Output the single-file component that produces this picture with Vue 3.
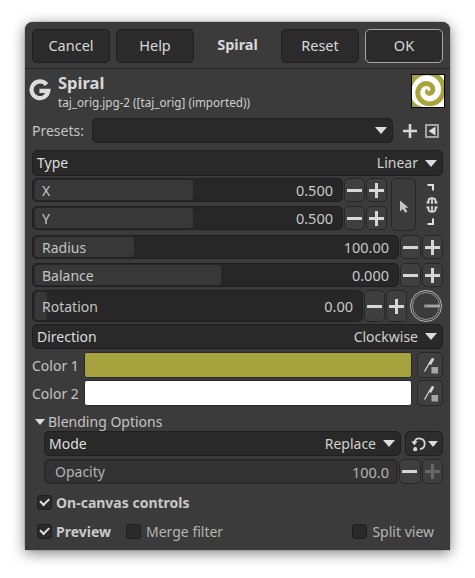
<script setup>
const xy = [
  { label: 'X', value: '0.500' },
  { label: 'Y', value: '0.500' },
]
const sliders = [
  { label: 'Radius', value: '100.00', fill: 99 },
  { label: 'Balance', value: '0.000', fill: 186 },
]
const colors = [
  { label: 'Color 1', cls: 'olive' },
  { label: 'Color 2', cls: 'white' },
]

function spiralPath() {
  const pts = []
  for (let a = -Math.PI * 1.25; a <= 9.0; a += 0.15) {
    const r = 15.5 - (11 * a) / (2 * Math.PI)
    pts.push((17 + r * Math.cos(a)).toFixed(2) + ' ' + (17 + r * Math.sin(a)).toFixed(2))
  }
  return 'M' + pts.join('L')
}
const spiral = spiralPath()
</script>

<template>
  <div class="page">
    <div class="win">
      <header class="head">
        <button class="btn">Cancel</button>
        <button class="btn">Help</button>
        <div class="head-title">Spiral</div>
        <button class="btn">Reset</button>
        <button class="btn ok">OK</button>
      </header>

      <main class="body">
        <section class="info">
          <svg class="logo" viewBox="0 0 22 22" width="22" height="22">
            <path d="M17.6 5.6A8.4 8.4 0 1 0 19.3 11.8H10.4" fill="none" stroke="#dcdcdc" stroke-width="4.2" />
          </svg>
          <div class="info-text">
            <div class="info-title">Spiral</div>
            <div class="info-sub">taj_orig.jpg-2 ([taj_orig] (imported))</div>
          </div>
          <svg class="thumb" viewBox="0 0 34 34" width="34" height="34">
            <defs>
              <clipPath id="thumb-clip"><rect x="1" y="1" width="32" height="32" /></clipPath>
            </defs>
            <rect x="0" y="0" width="34" height="34" fill="#000" />
            <rect x="1" y="1" width="32" height="32" fill="#fff" />
            <g clip-path="url(#thumb-clip)">
              <path d="M1 1H13C7 3 3 7 1 13Z" fill="#a8a33c" />
              <path d="M1 25C3 29 7 32 12 33H1Z" fill="#a8a33c" />
              <path :d="spiral" fill="none" stroke="#a8a33c" stroke-width="5" />
            </g>
          </svg>
        </section>

        <section class="presets">
          <span class="lbl presets-lbl">Presets:</span>
          <div class="combo presets-combo"><i class="tri"></i></div>
          <svg class="plain-plus" viewBox="0 0 14 14" width="14" height="14"><path d="M7 0V14M0 7H14" stroke="#d6d6d6" stroke-width="2.6" /></svg>
          <svg class="menu-ic" viewBox="0 0 14 14" width="14" height="14">
            <rect x="1" y="1" width="12" height="12" fill="none" stroke="#a4a4a4" stroke-width="2" />
            <path d="M10.5 2.5V11.5L3.5 7Z" fill="#e0e0e0" />
          </svg>
        </section>

        <div class="combo type-row"><span>Type</span><span class="combo-val">Linear</span><i class="tri"></i></div>

        <section class="xy">
          <div class="xy-rows">
            <div v-for="r in xy" :key="r.label" class="spin-row">
              <div class="spin xy-spin">
                <div class="fill" style="width: 158px"></div>
                <span class="spin-lbl xy-lbl">{{ r.label }}</span>
                <span class="spin-val">{{ r.value }}</span>
              </div>
              <button class="sbtn minus"></button>
              <button class="sbtn plus"></button>
            </div>
          </div>
          <button class="pick">
            <svg viewBox="0 0 14 16" width="14" height="16"><path d="M3 3.5V14.5L5.6 12L8.4 15.8L10.4 14.4L8 10.8H11.6Z" fill="#c4c4c4" /></svg>
          </button>
          <svg class="chain" viewBox="0 0 14 54" width="14" height="54">
            <path d="M1.5 7H7V12.5M1.5 46H7V40.5" fill="none" stroke="#e0e0e0" stroke-width="2" />
            <path d="M0.5 24.5H3.5M8.5 24.5H11.5M0.5 29.5H3.5M8.5 29.5H11.5M6 20.5V26M6 28V33.5" stroke="#d6d6d6" stroke-width="1.8" fill="none" />
            <path d="M2.5 24V22.5C2.5 19.5 9.5 19.5 9.5 22.5V24M2.5 30V31.5C2.5 34.5 9.5 34.5 9.5 31.5V30" fill="none" stroke="#d6d6d6" stroke-width="1.8" />
          </svg>
        </section>

        <div v-for="s in sliders" :key="s.label" class="spin-row slider">
          <div class="spin wide-spin">
            <div class="fill" :style="{ width: s.fill + 'px' }"></div>
            <span class="spin-lbl">{{ s.label }}</span>
            <span class="spin-val">{{ s.value }}</span>
          </div>
          <button class="sbtn minus"></button>
          <button class="sbtn plus"></button>
        </div>

        <section class="rotation">
          <div class="spin rot-spin">
            <div class="fill" style="width: 12px"></div>
            <span class="spin-lbl">Rotation</span>
            <span class="spin-val">0.00</span>
          </div>
          <button class="sbtn minus"></button>
          <button class="sbtn plus"></button>
          <svg class="dial" viewBox="0 0 32 32" width="32" height="32">
            <circle cx="16" cy="16" r="15.5" fill="none" stroke="#b8b8b8" />
            <circle cx="16" cy="16" r="13.5" fill="none" stroke="#969696" />
            <path d="M14 16H30" stroke="#8a8a8a" stroke-width="3.2" />
            <path d="M17 16H30" stroke="#c4c4c4" stroke-width="1" />
          </svg>
        </section>

        <div class="combo dir-row"><span>Direction</span><span class="combo-val">Clockwise</span><i class="tri"></i></div>

        <div v-for="c in colors" :key="c.label" class="color-row">
          <span class="lbl color-lbl">{{ c.label }}</span>
          <div class="swatch-wrap"><div class="swatch" :class="c.cls"></div></div>
          <button class="drop">
            <svg viewBox="0 0 18 18" width="18" height="18">
              <path d="M3.5 15.5L9 6" stroke="#d6d6d6" stroke-width="1.3" />
              <path d="M7.5 7.5L10.5 2.5C11.2 1.4 13.6 2.4 13 3.8L10 9Z" fill="#d6d6d6" />
              <rect x="10.5" y="11" width="6.5" height="6.5" fill="#a6a6a6" />
            </svg>
          </button>
        </div>

        <div class="blend-head"><i class="tri blend-tri"></i><span>Blending Options</span></div>
        <section class="blend">
          <div class="mode-row">
            <div class="combo mode-combo"><span>Mode</span><span class="combo-val">Replace</span><i class="tri"></i></div>
            <button class="reset-mode">
              <svg viewBox="0 0 16 16" width="16" height="16">
                <path d="M3.4 6A5.3 5.3 0 1 1 9 13" fill="none" stroke="#d6d6d6" stroke-width="1.8" />
                <path d="M0.4 5.2H6.6L3.4 9.4Z" fill="#d6d6d6" />
                <circle cx="4.2" cy="13.2" r="2.1" fill="#d6d6d6" />
              </svg>
              <i class="tri"></i>
            </button>
          </div>
          <div class="opacity-row">
            <div class="spin op-spin">
              <span class="spin-lbl op-lbl">Opacity</span>
              <span class="spin-val">100.0</span>
            </div>
            <button class="sbtn minus"></button>
            <button class="sbtn plus off"></button>
          </div>
        </section>

        <label class="check-row canvas"><span class="box on"></span><b>On-canvas controls</b></label>
        <section class="foot">
          <label class="check-row"><span class="box on"></span><b>Preview</b></label>
          <label class="check-row merge"><span class="box"></span><span class="muted">Merge filter</span></label>
          <label class="check-row split"><span class="box"></span><span class="muted">Split view</span></label>
        </section>
      </main>
    </div>
  </div>
</template>

<style scoped>
.page {
  width: 475px;
  height: 578px;
  padding: 22px 25px 28px;
  box-sizing: border-box;
  font-family: "Noto Sans", "Liberation Sans", sans-serif;
  font-size: 14px;
  color: #d8d8d8;
  background: #fff;
}
.win {
  height: 528px;
  background: #3b3b3b;
  border-radius: 8px 8px 0 0;
  box-shadow: 0 3px 14px rgba(0, 0, 0, 0.5), 0 0 1px #222;
  display: flex;
  flex-direction: column;
}
button { font: inherit; color: inherit; padding: 0; }
.head {
  height: 47px;
  flex: none;
  box-sizing: border-box;
  border-bottom: 1px solid #272727;
  padding: 7px 7px 0;
  display: flex;
  gap: 6px;
  align-items: flex-start;
}
.btn {
  width: 78px;
  height: 34px;
  background: #2b2b2b;
  border: 1px solid #1f1f1f;
  border-radius: 5px;
  font-size: 14.5px;
  padding-bottom: 2px;
}
.btn.ok { border-color: #a8a8a8; }
.head-title {
  flex: 1;
  text-align: center;
  font-weight: 700;
  font-size: 14.5px;
  line-height: 31px;
}
.body {
  padding: 5px 7px 0;
  display: flex;
  flex-direction: column;
}
.info { display: flex; height: 34px; align-items: flex-start; margin-right: -2px; }
.logo { margin: 5px 0 0 -3px; flex: none; }
.info-text { flex: 1; margin-left: 7px; }
.info-title { font-weight: 700; font-size: 16.5px; line-height: 18px; }
.info-sub { font-size: 11.7px; line-height: 16px; margin-top: 2px; color: #cfcfcf; }
.thumb { flex: none; }
.presets { margin-top: 10px; height: 25px; display: flex; align-items: center; }
.lbl { color: #c4c4c4; }
.presets-lbl { width: 60px; flex: none; font-size: 14px; }
.combo {
  box-sizing: border-box;
  background: #292929;
  border: 1px solid #1f1f1f;
  border-radius: 5px;
  display: flex;
  align-items: center;
  padding: 0 5px 0 4px;
  color: #dedede;
}
.type-row > span { padding-bottom: 1px; }
.presets-combo { width: 301px; height: 25px; justify-content: flex-end; }
.tri {
  display: block;
  flex: none;
  width: 0;
  height: 0;
  border-left: 6px solid transparent;
  border-right: 6px solid transparent;
  border-top: 7px solid #dcdcdc;
  margin-left: 7px;
}
.plain-plus { margin-left: 10px; flex: none; }
.menu-ic { margin-left: 8px; flex: none; }
.type-row { margin-top: 7px; height: 26px; }
.combo-val { margin-left: auto; color: #d0d0d0; }
.xy { margin-top: 2px; display: flex; height: 53px; }
.xy-rows { display: flex; flex-direction: column; gap: 4px; }
.spin-row { display: flex; height: 24px; }
.spin {
  box-sizing: border-box;
  position: relative;
  height: 100%;
  background: #272727;
  border: 1px solid #1f1f1f;
  border-radius: 5px;
  display: flex;
  align-items: center;
  padding: 0 9px 0 9px;
  margin-right: 1px;
}
.xy-spin { width: 311px; }
.wide-spin { width: 367px; }
.fill {
  position: absolute;
  left: 2px;
  top: 1px;
  bottom: 1px;
  background: #383838;
  border-radius: 3px;
}
.spin-lbl { position: relative; color: #c4c4c4; font-size: 14px; }
.spin-val { position: relative; margin-left: auto; color: #c8c8c8; font-size: 14.5px; }
.sbtn {
  position: relative;
  box-sizing: border-box;
  flex: none;
  width: 21px;
  height: 100%;
  background: #3f3f3f;
  border: 1px solid #272727;
  border-radius: 5px;
  margin-right: 1px;
}
.sbtn:last-child { margin-right: 0; }
.sbtn::before {
  content: "";
  position: absolute;
  left: 50%;
  top: 50%;
  width: 15px;
  height: 3px;
  margin: -1.5px 0 0 -7.5px;
  background: #d6d6d6;
}
.sbtn.plus::after {
  content: "";
  position: absolute;
  left: 50%;
  top: 50%;
  width: 3px;
  height: 15px;
  margin: -7.5px 0 0 -1.5px;
  background: #d6d6d6;
}
.sbtn.off::before, .sbtn.off::after { background: #666; }
.pick {
  box-sizing: border-box;
  width: 25px;
  height: 53px;
  margin-left: 4px;
  background: #3b3b3b;
  border: 1px solid #272727;
  border-radius: 5px;
  display: flex;
  align-items: center;
  justify-content: center;
  flex: none;
}
.chain { flex: none; margin-left: 10px; }
.slider { margin-top: 4px; }
.rotation { margin-top: 3px; height: 32px; display: flex; align-items: stretch; }
.rot-spin { width: 331px; }
.dial { margin-left: 3px; flex: none; }
.rotation .sbtn { margin-right: 1px; }
.rotation .sbtn.plus { margin-right: 0; }
.dir-row { margin-top: 2px; height: 25px; }
.color-row { display: flex; height: 26px; margin-top: 2px; align-items: center; }
.dir-row + .color-row { margin-top: 3px; }
.color-lbl { width: 52px; flex: none; font-size: 14px; }
.swatch-wrap {
  box-sizing: border-box;
  width: 328px;
  height: 26px;
  background: #2a2a2a;
  border-radius: 5px;
  padding: 1px;
  flex: none;
}
.swatch { height: 100%; border-radius: 2px; }
.swatch.olive { background: #a6a23e; }
.swatch.white { background: #fff; }
.drop {
  box-sizing: border-box;
  flex: none;
  width: 26px;
  height: 26px;
  margin-left: 5px;
  background: #3f3f3f;
  border: 1px solid #272727;
  border-radius: 5px;
  display: flex;
  align-items: center;
  justify-content: center;
}
.blend-head { margin-top: 7px; height: 17px; display: flex; align-items: center; color: #c4c4c4; padding-left: 3px; font-size: 14px; }
.blend-tri { margin: 0 3px 0 0; border-left-width: 5px; border-right-width: 5px; border-top-width: 6px; }
.blend { margin: 1px 0 0 12px; }
.mode-row { display: flex; height: 25px; }
.mode-combo { width: 357px; }
.reset-mode {
  box-sizing: border-box;
  flex: none;
  width: 38px;
  height: 25px;
  margin-left: 4px;
  background: #2d2d2d;
  border: 1px solid #1f1f1f;
  border-radius: 5px;
  display: flex;
  align-items: center;
  justify-content: center;
}
.reset-mode svg { flex: none; }
.reset-mode .tri { margin-left: 1px; border-left-width: 5px; border-right-width: 5px; border-top-width: 6px; }
.opacity-row { display: flex; height: 25px; margin-top: 3px; }
.op-spin { width: 354px; background: #333; padding: 0 7px 0 9px; border-width: 2px; border-color: #2a2a2a; margin-right: 1px; }
.op-lbl { color: #b4b4b4; }
.op-spin .spin-val { color: #b4b4b4; }
.opacity-row .sbtn { width: 21.5px; }
.check-row { display: flex; align-items: center; height: 17px; }
.check-row b { font-weight: 700; color: #c8c8c8; font-size: 14px; }
.canvas { margin: 10px 0 0 5px; }
.box {
  box-sizing: border-box;
  position: relative;
  flex: none;
  width: 15px;
  height: 15px;
  margin-right: 4px;
  background: #2a2a2a;
  border: 1px solid #1f1f1f;
  border-radius: 3px;
}
.box.on::after {
  content: "";
  position: absolute;
  left: 2px;
  top: 1.5px;
  width: 7px;
  height: 3.5px;
  border-left: 2.4px solid #e0e0e0;
  border-bottom: 2.4px solid #e0e0e0;
  transform: rotate(-45deg);
}
.foot { display: flex; margin: 12px 0 0 5px; }
.merge { margin-left: 15px; }
.split { margin-left: auto; margin-right: 9px; }
.muted { color: #b4b4b4; font-size: 14px; }
.merge .box, .split .box { margin-right: 5px; }
</style>
